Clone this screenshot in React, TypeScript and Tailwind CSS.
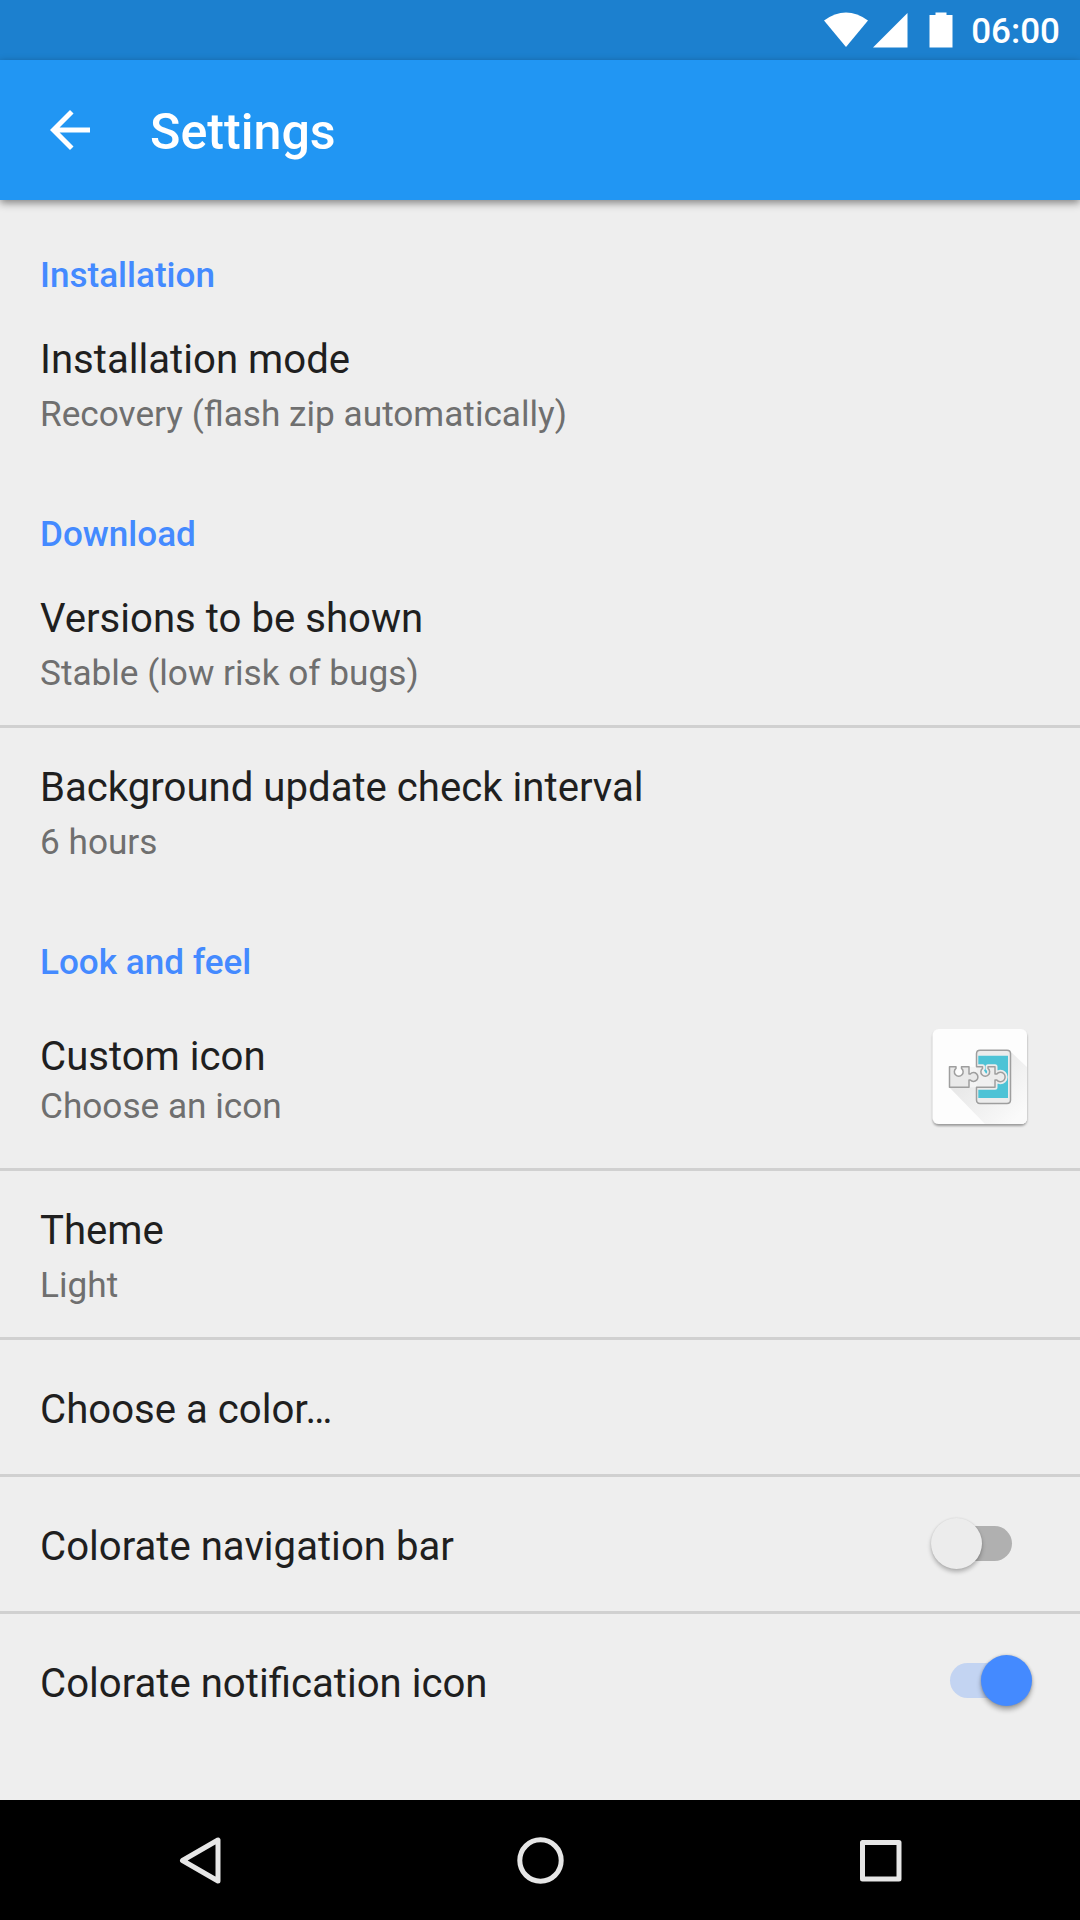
import type { ReactNode } from "react";

function Heading({ children }: { children: ReactNode }) {
  return <h2 className="h-[41px] text-[35.1px] leading-[41px] font-medium text-[#448aff]">{children}</h2>;
}

function Title({ children }: { children: ReactNode }) {
  return <div className="h-[47px] text-[40.15px] leading-[47px] text-[#1f1f1f]">{children}</div>;
}

function Summary({ children }: { children: ReactNode }) {
  return <div className="h-[41px] text-[35.2px] leading-[41px] text-[#6f6f6f]">{children}</div>;
}

function Divider() {
  return <div className="h-[3px] bg-[#d0d0d0]" />;
}

function Preference({ title, summary, last = false }: { title: string; summary: string; last?: boolean }) {
  return (
    <div className={last ? "h-[159px]" : "h-[166px]"}>
      <div className="flex flex-col gap-[11px] px-10 pt-9">
        <Title>{title}</Title>
        <Summary>{summary}</Summary>
      </div>
    </div>
  );
}

function Category({ children }: { children: ReactNode }) {
  return (
    <div className="h-[100px] px-10 pt-[55px]">
      <Heading>{children}</Heading>
    </div>
  );
}

function SimpleRow({ title, children }: { title: string; children?: ReactNode }) {
  return (
    <div className="flex h-[134px] items-center justify-between pl-10">
      <div className="mt-[5px]">
        <Title>{title}</Title>
      </div>
      {children}
    </div>
  );
}

function Switch({ on }: { on: boolean }) {
  return on ? (
    <div className="relative mr-[48.5px] h-[52px] w-[81.5px]">
      <div className="absolute top-[8px] left-0 h-[35px] w-[62px] rounded-full bg-[#c3d4f2]" />
      <div className="absolute top-0 right-0 size-[51px] rounded-full bg-[#448aff] shadow-[0_4px_5px_rgba(0,0,0,0.3),0_0_3px_rgba(0,0,0,0.2)]" />
    </div>
  ) : (
    <div className="relative mr-[68px] h-[52px] w-[81.5px]">
      <div className="absolute top-[8px] right-0 h-[35px] w-[62px] rounded-full bg-[#b0b0b0]" />
      <div className="absolute top-0 left-0 size-[51px] rounded-full bg-[#ececec] shadow-[0_3px_4px_rgba(0,0,0,0.26),0_0_2px_rgba(0,0,0,0.1)]" />
    </div>
  );
}

const LEFT_PIECE =
  "M39.5 56.8H46V58.400A4.400 4.400 0 1 0 51.500 58.400V56.8H59V64H60.300A4.400 4.400 0 1 1 60.300 70H59V77.300H39.500Z";
const RIGHT_PIECE =
  "M66.500 56.8H72.500V58.400A4.400 4.400 0 1 0 78 58.400V56.8H85V64H86.800A4.700 4.700 0 1 1 86.800 70H85V77.300H66.500";

function XposedIcon() {
  return (
    <svg className="mt-[23px] mr-[30px] size-[140px]" viewBox="0 0 140 140">
      <defs>
        <linearGradient id="cast" x1="55" y1="60" x2="105" y2="110" gradientUnits="userSpaceOnUse">
          <stop offset="0" stopColor="#e6e6e6" />
          <stop offset="1" stopColor="#fafafa" />
        </linearGradient>
        <filter id="drop" x="-20%" y="-20%" width="140%" height="140%">
          <feDropShadow dx="0" dy="2" stdDeviation="1.3" floodOpacity="0.35" />
        </filter>
      </defs>
      <rect x="22.700" y="19" width="94.300" height="95" rx="6" fill="#fdfdfd" filter="url(#drop)" />
      <path d="M39 77L75 114H111Q117 114 117 108V57L100 41V94H66V77Z" fill="url(#cast)" />
      <rect x="66.500" y="40.200" width="34" height="53.300" rx="3.500" fill="#ececec" />
      <path d="M68.300 45.800H98V88H68.300Z" fill="#4dc3d6" />
      <path d={RIGHT_PIECE} fill="#ebebeb" stroke="#ececec" strokeWidth="5" strokeLinejoin="round" />
      <path d="M59 57H67V77.300H59Z" fill="#f4f4f4" />
      <path d="M67 57H72L84 77H67Z" fill="#f0f0f0" />
      <path d={LEFT_PIECE} fill="#e9e9e9" stroke="#9e9e9e" strokeWidth="1.500" strokeLinejoin="round" />
      <path
        d={RIGHT_PIECE + "V90Q66.500 93.500 70 93.500H97Q100.500 93.500 100.500 90V43.700Q100.500 40.200 97 40.200H70Q66.500 40.200 66.500 43.700Z"}
        fill="none"
        stroke="#9e9e9e"
        strokeWidth="1.500"
        strokeLinejoin="round"
      />
    </svg>
  );
}

function StatusBar() {
  return (
    <div className="flex h-[60px] items-center justify-end bg-[#1c80cf] pr-5 text-white">
      <svg className="h-[60px] w-[140px]" viewBox="820 0 140 60" fill="currentColor">
        <path d="M824 20.500Q846 4.500 868 20.500L846 47Z" />
        <path d="M873 47.500L907.500 13V47.500Z" />
        <path d="M929.500 15H935.500V12.500H946.500V15H952.500V47.500H929.500Z" />
      </svg>
      <span className="mt-[3px] ml-[11px] text-[35px] leading-[41px] font-medium">06:00</span>
    </div>
  );
}

function NavBar() {
  return (
    <div className="h-[120px] bg-black">
      <svg className="h-[120px] w-full" viewBox="0 0 1080 120" fill="none" stroke="#e6e6e6" strokeWidth="5" strokeLinejoin="round">
        <path d="M182.500 60.500L218 40V81Z" />
        <circle cx="540.500" cy="60.500" r="20.700" />
        <rect x="862.500" y="42.500" width="36.500" height="36.500" />
      </svg>
    </div>
  );
}

export default function App() {
  return (
    <div className="flex h-[1920px] w-[1080px] flex-col overflow-hidden bg-[#eeeeee] font-[Roboto,sans-serif]">
      <StatusBar />
      <header className="z-10 flex h-[140px] items-center bg-[#2196f3] text-white shadow-[0_3px_8px_rgba(0,0,0,0.45)]">
        <svg className="ml-10 size-[60px]" viewBox="0 0 24 24" fill="currentColor">
          <path d="M20 11H7.830l5.590-5.590L12 4l-8 8 8 8 1.410-1.410L7.830 13H20v-2z" />
        </svg>
        <h1 className="mt-1 ml-[50px] text-[50.2px] leading-[58px] font-medium">Settings</h1>
      </header>
      <main className="h-[1600px]">
        <Category>Installation</Category>
        <Preference title="Installation mode" summary="Recovery (flash zip automatically)" last />
        <Category>Download</Category>
        <Preference title="Versions to be shown" summary="Stable (low risk of bugs)" />
        <Divider />
        <Preference title="Background update check interval" summary="6 hours" last />
        <Category>Look and feel</Category>
        <div className="flex h-[181px] items-start justify-between pl-10">
          <div className="flex flex-col gap-[6px] pt-[46px]">
            <Title>Custom icon</Title>
            <Summary>Choose an icon</Summary>
          </div>
          <XposedIcon />
        </div>
        <Divider />
        <Preference title="Theme" summary="Light" />
        <Divider />
        <SimpleRow title="Choose a color…" />
        <Divider />
        <SimpleRow title="Colorate navigation bar">
          <Switch on={false} />
        </SimpleRow>
        <Divider />
        <SimpleRow title="Colorate notification icon">
          <Switch on />
        </SimpleRow>
      </main>
      <NavBar />
    </div>
  );
}
